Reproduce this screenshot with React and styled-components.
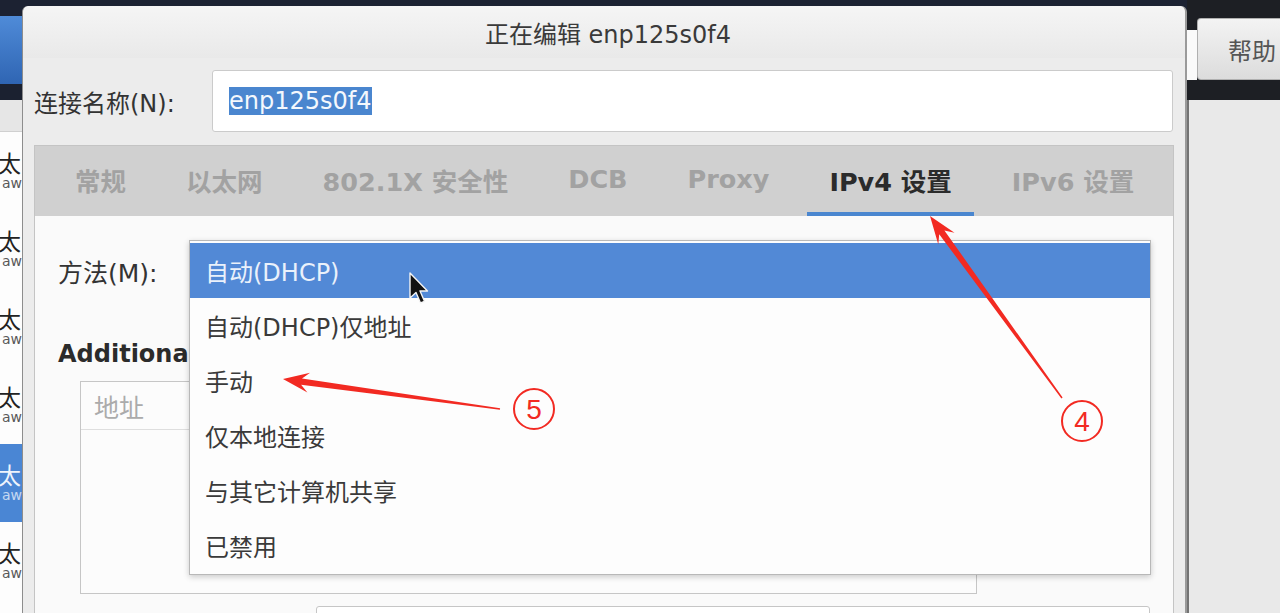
import styled, { createGlobalStyle } from "styled-components";

const FONT = `"DejaVu Sans", "Noto Sans CJK SC", sans-serif`;

const GlobalStyle = createGlobalStyle`
  html, body {
    margin: 0;
    padding: 0;
    background: #1c2232;
    overflow: hidden;
  }
  * {
    box-sizing: border-box;
  }
`;

const tabs = ["常规", "以太网", "802.1X 安全性", "DCB", "Proxy", "IPv4 设置", "IPv6 设置"];
const methods = ["自动(DHCP)", "自动(DHCP)仅地址", "手动", "仅本地连接", "与其它计算机共享", "已禁用"];

// tapered arrow: thin tail, fat neck, barbed head
function arrowPoints(tail, tip, headLen, headHalf, neckHalf, tailHalf) {
  const dx = tip[0] - tail[0];
  const dy = tip[1] - tail[1];
  const len = Math.hypot(dx, dy);
  const ux = dx / len;
  const uy = dy / len;
  const nx = -uy;
  const ny = ux;
  const base = [tip[0] - ux * headLen, tip[1] - uy * headLen];
  const neck = [tip[0] - ux * headLen * 0.72, tip[1] - uy * headLen * 0.72];
  const pts = [
    [tail[0] + nx * tailHalf, tail[1] + ny * tailHalf],
    [neck[0] + nx * neckHalf, neck[1] + ny * neckHalf],
    [base[0] + nx * headHalf, base[1] + ny * headHalf],
    tip,
    [base[0] - nx * headHalf, base[1] - ny * headHalf],
    [neck[0] - nx * neckHalf, neck[1] - ny * neckHalf],
    [tail[0] - nx * tailHalf, tail[1] - ny * tailHalf],
  ];
  return pts.map((p) => p.map((v) => v.toFixed(1)).join(",")).join(" ");
}

function Annotations() {
  const red = "#f22a22";
  return (
    <Overlay width="1280" height="613" viewBox="0 0 1280 613">
      <polygon points={arrowPoints([1062, 398], [930, 216], 28, 10, 3.2, 0.8)} fill={red} />
      <polygon points={arrowPoints([500, 409], [283, 379], 26, 10, 3.2, 0.8)} fill={red} />
      <circle cx="1082" cy="421" r="20" fill="none" stroke={red} strokeWidth="2" />
      <text x="1082" y="431" fill={red} fontSize="28" textAnchor="middle" fontFamily="Liberation Sans, sans-serif">4</text>
      <circle cx="534" cy="409" r="20" fill="none" stroke={red} strokeWidth="2" />
      <text x="534" y="419" fill={red} fontSize="28" textAnchor="middle" fontFamily="Liberation Sans, sans-serif">5</text>
    </Overlay>
  );
}

function Cursor() {
  return (
    <CursorIcon width="22" height="34" viewBox="0 0 22 34">
      <path
        d="M2 1 L2 26 L8 20.5 L12.5 31 L16.5 29.3 L12 19 L19.5 19 Z"
        fill="#111"
        stroke="#f4f4f4"
        strokeWidth="1.4"
        strokeLinejoin="round"
      />
    </CursorIcon>
  );
}

export default function App() {
  return (
    <>
      <GlobalStyle />
      <Screen>
        <LeftStrip>
          <StripDark />
          <StripBlue />
          <StripBand />
          <StripGray />
          <StripList>
            {[0, 1, 2, 3, 4, 5].map((i) => (
              <StripItem key={i} selected={i === 4}>
                <StripName>以太</StripName>
                <StripSub>enp125s0 aw</StripSub>
              </StripItem>
            ))}
          </StripList>
        </LeftStrip>

        <Dialog>
          <TitleBar>正在编辑 enp125s0f4</TitleBar>
          <NameRow>
            <FieldLabel>连接名称(N):</FieldLabel>
            <NameInput>
              <Selected>enp125s0f4</Selected>
            </NameInput>
          </NameRow>

          <Notebook>
            <TabBar>
              {tabs.map((t) => (
                <Tab key={t} active={t === "IPv4 设置"}>
                  {t}
                </Tab>
              ))}
            </TabBar>
            <TabContent>
              <MethodRow>
                <MethodLabel>方法(M):</MethodLabel>
                <Combo />
              </MethodRow>
              <SectionTitle>Additional static addresses</SectionTitle>
              <AddressBox>
                <AddressHeader>地址</AddressHeader>
              </AddressBox>
              <BottomRow>
                <BottomInput />
              </BottomRow>

              <Popup>
                {methods.map((m, i) => (
                  <PopupItem key={m} highlighted={i === 0}>
                    {m}
                  </PopupItem>
                ))}
              </Popup>
            </TabContent>
          </Notebook>
        </Dialog>

        <RightPanel>
          <RightTop />
          <ButtonRow>
            <Sliver />
            <HelpButton>帮助</HelpButton>
          </ButtonRow>
          <RightBand />
          <RightGray />
        </RightPanel>

        <Cursor />
        <Annotations />
      </Screen>
    </>
  );
}

const Screen = styled.div`
  position: relative;
  display: flex;
  width: 1280px;
  height: 613px;
  overflow: hidden;
  font-family: ${FONT};
  background: #1c2232;
`;

const LeftStrip = styled.div`
  flex: 0 0 22px;
  display: flex;
  flex-direction: column;
  overflow: hidden;
`;

const StripDark = styled.div`
  flex: 0 0 16px;
  background: #1c2232;
`;

const StripBlue = styled.div`
  flex: 0 0 68px;
  background: linear-gradient(#4f8bd8, #2f65b3);
`;

const StripBand = styled.div`
  flex: 0 0 16px;
  background: #1b2130;
`;

const StripGray = styled.div`
  flex: 0 0 32px;
  background: #e6e6e6;
  border-bottom: 1px solid #d0d0d0;
`;

const StripList = styled.div`
  flex: 1;
  background: #fdfdfd;
  display: flex;
  flex-direction: column;
`;

const StripItem = styled.div`
  flex: 0 0 78px;
  display: flex;
  flex-direction: column;
  align-items: flex-end;
  justify-content: center;
  white-space: nowrap;
  background: ${(p) => (p.selected ? "#4a86d4" : "transparent")};
  color: ${(p) => (p.selected ? "#eef4fc" : "#222")};
`;

const StripName = styled.div`
  font-size: 23px;
  line-height: 24px;
  margin-right: 1px;
`;

const StripSub = styled.div`
  font-size: 14px;
  line-height: 15px;
  opacity: 0.75;
  margin-right: 0;
`;

const Dialog = styled.div`
  flex: 0 0 1165px;
  margin-top: 6px;
  display: flex;
  flex-direction: column;
  overflow: hidden;
  background: #ececec;
  border-left: 1px solid #8d8d8d;
  border-right: 2px solid #9a9a9a;
  border-radius: 6px 6px 0 0;
`;

const TitleBar = styled.div`
  flex: 0 0 52px;
  display: flex;
  align-items: center;
  justify-content: center;
  padding-left: 8px;
  font-size: 24px;
  color: #3a3a3a;
  background: linear-gradient(#f5f5f5, #e9e9e9);
  border-radius: 6px 6px 0 0;
`;

const NameRow = styled.div`
  flex: 0 0 62px;
  display: flex;
  align-items: center;
  margin-top: 12px;
  padding: 0 12px 0 11px;
`;

const FieldLabel = styled.div`
  flex: 0 0 178px;
  font-size: 24px;
  color: #333;
  white-space: nowrap;
`;

const NameInput = styled.div`
  flex: 1;
  height: 62px;
  display: flex;
  align-items: center;
  padding-left: 16px;
  background: #fff;
  border: 1px solid #cbcbcb;
  border-radius: 3px;
`;

const Selected = styled.span`
  font-size: 24px;
  line-height: 28px;
  color: #f4f8fd;
  background: #4a86cf;
`;

const Notebook = styled.div`
  flex: 1 0 auto;
  margin: 13px 11px 0 11px;
  display: flex;
  flex-direction: column;
  background: #fafafa;
  border: 1px solid #c4c4c4;
  border-bottom: none;
`;

const TabBar = styled.div`
  flex: 0 0 70px;
  display: flex;
  padding-left: 18px;
  background: #d0d0d0;
`;

const Tab = styled.div`
  display: flex;
  align-items: center;
  padding: 0 22px;
  margin-right: 16px;
  font-size: 25.5px;
  font-weight: bold;
  white-space: nowrap;
  color: ${(p) => (p.active ? "#2b2b2b" : "#a2a2a2")};
  border-bottom: 4px solid ${(p) => (p.active ? "#4a86cf" : "transparent")};
`;

const TabContent = styled.div`
  position: relative;
  flex: 1 0 auto;
  padding: 25px 23px 0;
`;

const MethodRow = styled.div`
  display: flex;
  align-items: center;
  height: 60px;
`;

const MethodLabel = styled.div`
  flex: 0 0 131px;
  font-size: 25px;
  color: #333;
  white-space: nowrap;
`;

const Combo = styled.div`
  flex: 1;
  height: 60px;
  background: #f3f3f3;
  border: 1px solid #bdbdbd;
  border-radius: 3px;
`;

const SectionTitle = styled.div`
  margin-top: 40px;
  font-size: 24px;
  line-height: 26px;
  font-weight: bold;
  color: #2b2b2b;
  white-space: nowrap;
`;

const AddressBox = styled.div`
  width: 897px;
  height: 213px;
  margin: 14px 0 0 22px;
  background: #fcfcfc;
  border: 1px solid #c6c6c6;
`;

const AddressHeader = styled.div`
  height: 48px;
  display: flex;
  align-items: center;
  padding-left: 13px;
  font-size: 25px;
  color: #ababab;
  border-bottom: 1px solid #dedede;
`;

const BottomRow = styled.div`
  display: flex;
  margin-top: 12px;
  padding-left: 258px;
`;

const BottomInput = styled.div`
  width: 834px;
  height: 40px;
  background: #fff;
  border: 1px solid #c6c6c6;
  border-radius: 3px;
`;

const Popup = styled.div`
  position: absolute;
  top: 24px;
  left: 154px;
  width: 962px;
  height: 335px;
  padding-top: 2px;
  background: #fdfdfd;
  border: 1px solid #b8b8b8;
  box-shadow: 0 2px 6px rgba(0, 0, 0, 0.2);
`;

const PopupItem = styled.div`
  height: 55px;
  display: flex;
  align-items: center;
  padding-left: 15px;
  font-size: 24px;
  white-space: nowrap;
  color: ${(p) => (p.highlighted ? "#eaf1fb" : "#3a3a3a")};
  background: ${(p) => (p.highlighted ? "#5289d6" : "transparent")};
`;

const RightPanel = styled.div`
  flex: 1;
  display: flex;
  flex-direction: column;
`;

const RightTop = styled.div`
  flex: 0 0 18px;
  background: #1d1f24;
`;

const ButtonRow = styled.div`
  flex: 0 0 62px;
  display: flex;
  background: #1d1f24;
`;

const Sliver = styled.div`
  flex: 0 0 10px;
  margin-top: 12px;
  background: #fafafa;
`;

const HelpButton = styled.div`
  flex: 1;
  display: flex;
  align-items: center;
  padding-left: 30px;
  font-size: 24px;
  color: #555;
  white-space: nowrap;
  background: linear-gradient(#f3f3f3, #dcdcdc);
  border: 1px solid #b0b0b0;
  border-right: none;
  border-radius: 4px 0 0 4px;
`;

const RightBand = styled.div`
  flex: 0 0 20px;
  background: #1d1f24;
`;

const RightGray = styled.div`
  flex: 1;
  background: #e9e9e9;
  border-left: 2px solid #737373;
`;

const CursorIcon = styled.svg`
  position: absolute;
  left: 408px;
  top: 272px;
`;

const Overlay = styled.svg`
  position: absolute;
  left: 0;
  top: 0;
  pointer-events: none;
`;
